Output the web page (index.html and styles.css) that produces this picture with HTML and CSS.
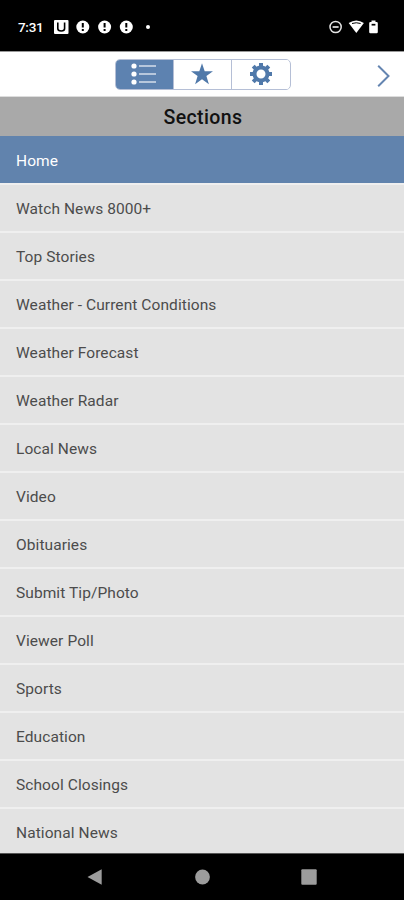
FILE: index.html
```html
<!DOCTYPE html>
<html lang="en">
<head>
    <meta charset="UTF-8">
    <meta name="viewport" content="width=device-width, initial-scale=1.0">
    <title>Sections</title>
    <link rel="stylesheet" href="styles.css">
</head>
<body>
    <div class="status-bar">
        <span class="time">7:31</span>
        <svg class="status-left" width="110" height="16" viewBox="0 0 110 16">
            <rect x="1" y="1" width="14.5" height="14" rx="1" fill="#fff"/>
            <path d="M4.8 3.5V9.5Q4.8 12 8.2 12T11.6 9.5V3.5" fill="none" stroke="#000" stroke-width="1.6"/>
            <g fill="#fff">
                <circle cx="29.8" cy="8" r="6.5"/>
                <circle cx="51.6" cy="8" r="6.5"/>
                <circle cx="73.3" cy="8" r="6.5"/>
                <circle cx="95" cy="8" r="2"/>
            </g>
            <path d="M29.8 4V8.5M29.8 10V12M51.6 4V8.5M51.6 10V12M73.3 4V8.5M73.3 10V12" stroke="#000" stroke-width="2"/>
        </svg>
        <svg class="status-right" width="52" height="16" viewBox="0 0 52 16">
            <circle cx="6.6" cy="8" r="5.6" fill="none" stroke="#e4e4e4" stroke-width="1.5"/>
            <path d="M3.6 8H9.6" stroke="#e4e4e4" stroke-width="1.7"/>
            <path d="M19.7 4Q27.3 -1 34.9 4L27.3 14Z" fill="#fff"/>
            <path d="M23 4.5Q27.3 3 31.6 4.5" fill="none" stroke="#000" stroke-width="1"/>
            <path d="M40.2 4.2Q40.2 3 41.4 3H42.5V1.5H46.5V3H47.6Q48.8 3 48.8 4.2V13Q48.8 14.2 47.6 14.2H41.4Q40.2 14.2 40.2 13Z" fill="#fff"/>
            <path d="M42.6 5.7H46.4" stroke="#000" stroke-width="1.7"/>
        </svg>
    </div>
    <div class="toolbar">
        <div class="tabs">
            <button class="tab active" aria-label="Sections">
                <svg width="28" height="24" viewBox="0 0 28 24">
                    <g fill="#fff">
                        <circle cx="4" cy="4" r="2.6"/>
                        <circle cx="4" cy="12" r="2.6"/>
                        <circle cx="4" cy="20" r="2.6"/>
                    </g>
                    <path d="M9 4H26M9 12H26M9 20H26" stroke="#d5deea" stroke-width="1.4"/>
                </svg>
            </button>
            <button class="tab" aria-label="Favorites">
                <svg width="24" height="24" viewBox="0 0 24 24">
                    <path d="M12 1.2L14.7 9.2H23L16.4 14L18.9 22.2L12 17.3L5.1 22.2L7.6 14L1 9.2H9.3Z" fill="#5079aa"/>
                </svg>
            </button>
            <button class="tab" aria-label="Settings">
                <svg width="24" height="24" viewBox="0 0 24 24">
                    <circle cx="12" cy="12" r="6.5" fill="none" stroke="#5079aa" stroke-width="4"/>
                    <g stroke="#5079aa" stroke-width="4">
                        <path d="M12 1V5M12 19V23M1 12H5M19 12H23"/>
                        <path d="M4.2 4.2L7 7M17 17L19.8 19.8M4.2 19.8L7 17M17 7L19.8 4.2"/>
                    </g>
                </svg>
            </button>
        </div>
        <svg class="next" width="14" height="24" viewBox="0 0 14 24">
            <path d="M1.2 1.8L11.5 12L1.2 22.2" fill="none" stroke="#6485b1" stroke-width="2"/>
        </svg>
    </div>
    <h1 class="title">Sections</h1>
    <ul class="sections">
        <li class="selected">Home</li>
        <li>Watch News 8000+</li>
        <li>Top Stories</li>
        <li>Weather - Current Conditions</li>
        <li>Weather Forecast</li>
        <li>Weather Radar</li>
        <li>Local News</li>
        <li>Video</li>
        <li>Obituaries</li>
        <li>Submit Tip/Photo</li>
        <li>Viewer Poll</li>
        <li>Sports</li>
        <li>Education</li>
        <li>School Closings</li>
        <li>National News</li>
    </ul>
    <div class="nav-bar">
        <svg width="16" height="16" viewBox="0 0 16 16"><path d="M0.5 8L14.7 0.3V15.7Z" fill="#9c9c9c"/></svg>
        <svg width="16" height="16" viewBox="0 0 16 16"><circle cx="8.5" cy="8" r="7.4" fill="#9c9c9c"/></svg>
        <svg width="16" height="16" viewBox="0 0 16 16"><rect x="0.3" y="0.3" width="15.4" height="15.4" rx="1" fill="#9c9c9c"/></svg>
    </div>
</body>
</html>
```
FILE: styles.css
```css
* {
    box-sizing: border-box;
}
body {
    margin: 0;
    height: 900px;
    display: flex;
    flex-direction: column;
    overflow: hidden;
    background-color: #000;
    font-family: Roboto, sans-serif;
}
.status-bar {
    flex: none;
    height: 51px;
    padding: 2px 23px 0 18px;
    display: flex;
    align-items: center;
    color: #fff;
}
.time {
    width: 35px;
    font-size: 13.5px;
    font-weight: 500;
    letter-spacing: -0.3px;
}
.status-right {
    margin-left: auto;
}
.toolbar {
    flex: none;
    height: 46px;
    padding-left: 1px;
    display: grid;
    grid-template-columns: 1fr 176px 1fr;
    align-items: center;
    background-color: #fff;
    border-top: 1px solid #999;
    border-bottom: 1px solid #ddd;
}
.tabs {
    grid-column: 2;
    height: 31px;
    display: flex;
    border: 1px solid #b5bfd6;
    border-radius: 5px;
    overflow: hidden;
}
.tab {
    flex: 1;
    display: flex;
    align-items: center;
    justify-content: center;
    padding: 0;
    border: none;
    background-color: #fff;
}
.tab + .tab {
    border-left: 1px solid #b5bfd6;
}
.tab.active {
    background-color: #5d82b0;
}
.next {
    justify-self: end;
    margin-right: 13px;
    margin-top: 3px;
}
.title {
    flex: none;
    margin: 0;
    height: 39px;
    padding-left: 2px;
    line-height: 41px;
    background-color: #a9a9a9;
    color: #111;
    font-size: 19.5px;
    font-weight: 500;
    letter-spacing: 0.4px;
    text-align: center;
}
.sections {
    flex: 1;
    min-height: 0;
    margin: 0;
    padding: 0;
    overflow: hidden;
    list-style: none;
    background-color: #e3e3e3;
}
.sections li {
    height: 48px;
    padding-left: 16px;
    line-height: 49px;
    border-bottom: 2px solid #efefef;
    color: #4c4c4c;
    font-size: 15.5px;
    letter-spacing: 0.08px;
}
.sections .selected {
    height: 49px;
    line-height: 51px;
    background-color: #6183ad;
    color: #fff;
}
.nav-bar {
    flex: none;
    height: 47px;
    padding: 0 87px;
    display: flex;
    align-items: center;
    justify-content: space-between;
    border-top: 1px solid #555;
}
```
